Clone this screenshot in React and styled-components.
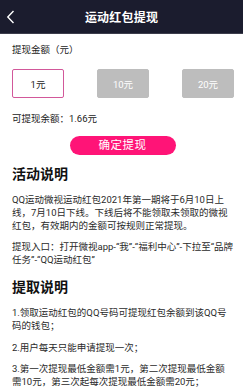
import React from "react";
import styled, { createGlobalStyle } from "styled-components";

const GlobalStyle = createGlobalStyle`
  html, body {
    margin: 0;
    padding: 0;
    background: #ffffff;
  }
  body {
    font-family: Roboto, "Noto Sans CJK SC", sans-serif;
    color: #2a2a2a;
  }
`;

const Page = styled.div`
  width: 243px;
  min-height: 389px;
  overflow: hidden;
`;

const Header = styled.header`
  height: 33px;
  background: #1b1c2e;
  border-bottom: 1px solid #3c3d4c;
  display: flex;
  align-items: center;
  justify-content: center;
  position: relative;
`;

const BackButton = styled.button`
  position: absolute;
  left: 3px;
  top: 9px;
  width: 14px;
  height: 16px;
  padding: 0;
  border: none;
  background: transparent;
  display: flex;
  align-items: center;
  justify-content: center;
`;

const Title = styled.h1`
  margin: 0;
  font-size: 12px;
  font-weight: 700;
  color: #ffffff;
  letter-spacing: 0.2px;
`;

const Body = styled.main`
  padding: 0 4px 0 12px;
`;

const Label = styled.div`
  margin-top: 9px;
  font-size: 9.5px;
  line-height: 13px;
  color: #222;
`;

const AmountRow = styled.div`
  margin-top: 13px;
  margin-right: 5px;
  display: flex;
  justify-content: space-between;
`;

const AmountOption = styled.button`
  width: 52px;
  height: 29px;
  box-sizing: border-box;
  padding: 0;
  border-radius: 2px;
  font-family: inherit;
  font-size: 9.5px;
  border: 1px solid ${({ $active }) => ($active ? "#d2589a" : "#bdbdbd")};
  background: ${({ $active }) => ($active ? "#ffffff" : "#bdbdbd")};
  color: ${({ $active }) => ($active ? "#222" : "#ffffff")};
`;

const Balance = styled.div`
  margin-top: 13.5px;
  font-size: 9.5px;
  line-height: 13px;
  color: #222;
`;

const SubmitWrap = styled.div`
  display: flex;
  justify-content: center;
  margin-top: 11.5px;
  padding-right: 6px;
`;

const SubmitButton = styled.button`
  width: 106px;
  height: 19px;
  padding: 0;
  border: none;
  border-radius: 10px;
  background: #ff1477;
  color: #ffffff;
  font-family: inherit;
  font-size: 11.5px;
  line-height: 19px;
  letter-spacing: 0.5px;
`;

const Heading = styled.h2`
  margin: ${({ $top }) => $top}px 0 9.75px;
  font-size: 14px;
  line-height: 18px;
  font-weight: 700;
  color: #111;
`;

const Para = styled.p`
  margin: 0 0 8.5px;
  font-size: 9.5px;
  line-height: 13px;
  white-space: nowrap;
  color: #2a2a2a;
`;

const amounts = ["1元", "10元", "20元"];

export default function App() {
  return (
    <Page>
      <GlobalStyle />
      <Header>
        <BackButton aria-label="返回">
          <svg width="9" height="14" viewBox="0 0 9 14">
            <path
              d="M7.5 1 L1.8 7 L7.5 13"
              fill="none"
              stroke="#ffffff"
              strokeWidth="1.4"
            />
          </svg>
        </BackButton>
        <Title>运动红包提现</Title>
      </Header>
      <Body>
        <Label>提现金额（元）</Label>
        <AmountRow>
          {amounts.map((a, i) => (
            <AmountOption key={a} $active={i === 0}>
              {a}
            </AmountOption>
          ))}
        </AmountRow>
        <Balance>可提现余额：1.66元</Balance>
        <SubmitWrap>
          <SubmitButton>确定提现</SubmitButton>
        </SubmitWrap>
        <Heading $top={10}>活动说明</Heading>
        <Para>
          QQ运动微视运动红包2021年第一期将于6月10日上
          <br />
          线，7月10日下线。下线后将不能领取未领取的微视
          <br />
          红包，有效期内的金额可按规则正常提现。
        </Para>
        <Para>
          提现入口：打开微视app-“我”-“福利中心”-下拉至“品牌
          <br />
          任务”-“QQ运动红包”
        </Para>
        <Heading $top={12}>提取说明</Heading>
        <Para>
          1.领取运动红包的QQ号码可提现红包余额到该QQ号
          <br />
          码的钱包；
        </Para>
        <Para>2.用户每天只能申请提现一次；</Para>
        <Para>
          3.第一次提现最低金额需1元，第二次提现最低金额
          <br />
          需10元，第三次起每次提现最低金额需20元；
        </Para>
      </Body>
    </Page>
  );
}
